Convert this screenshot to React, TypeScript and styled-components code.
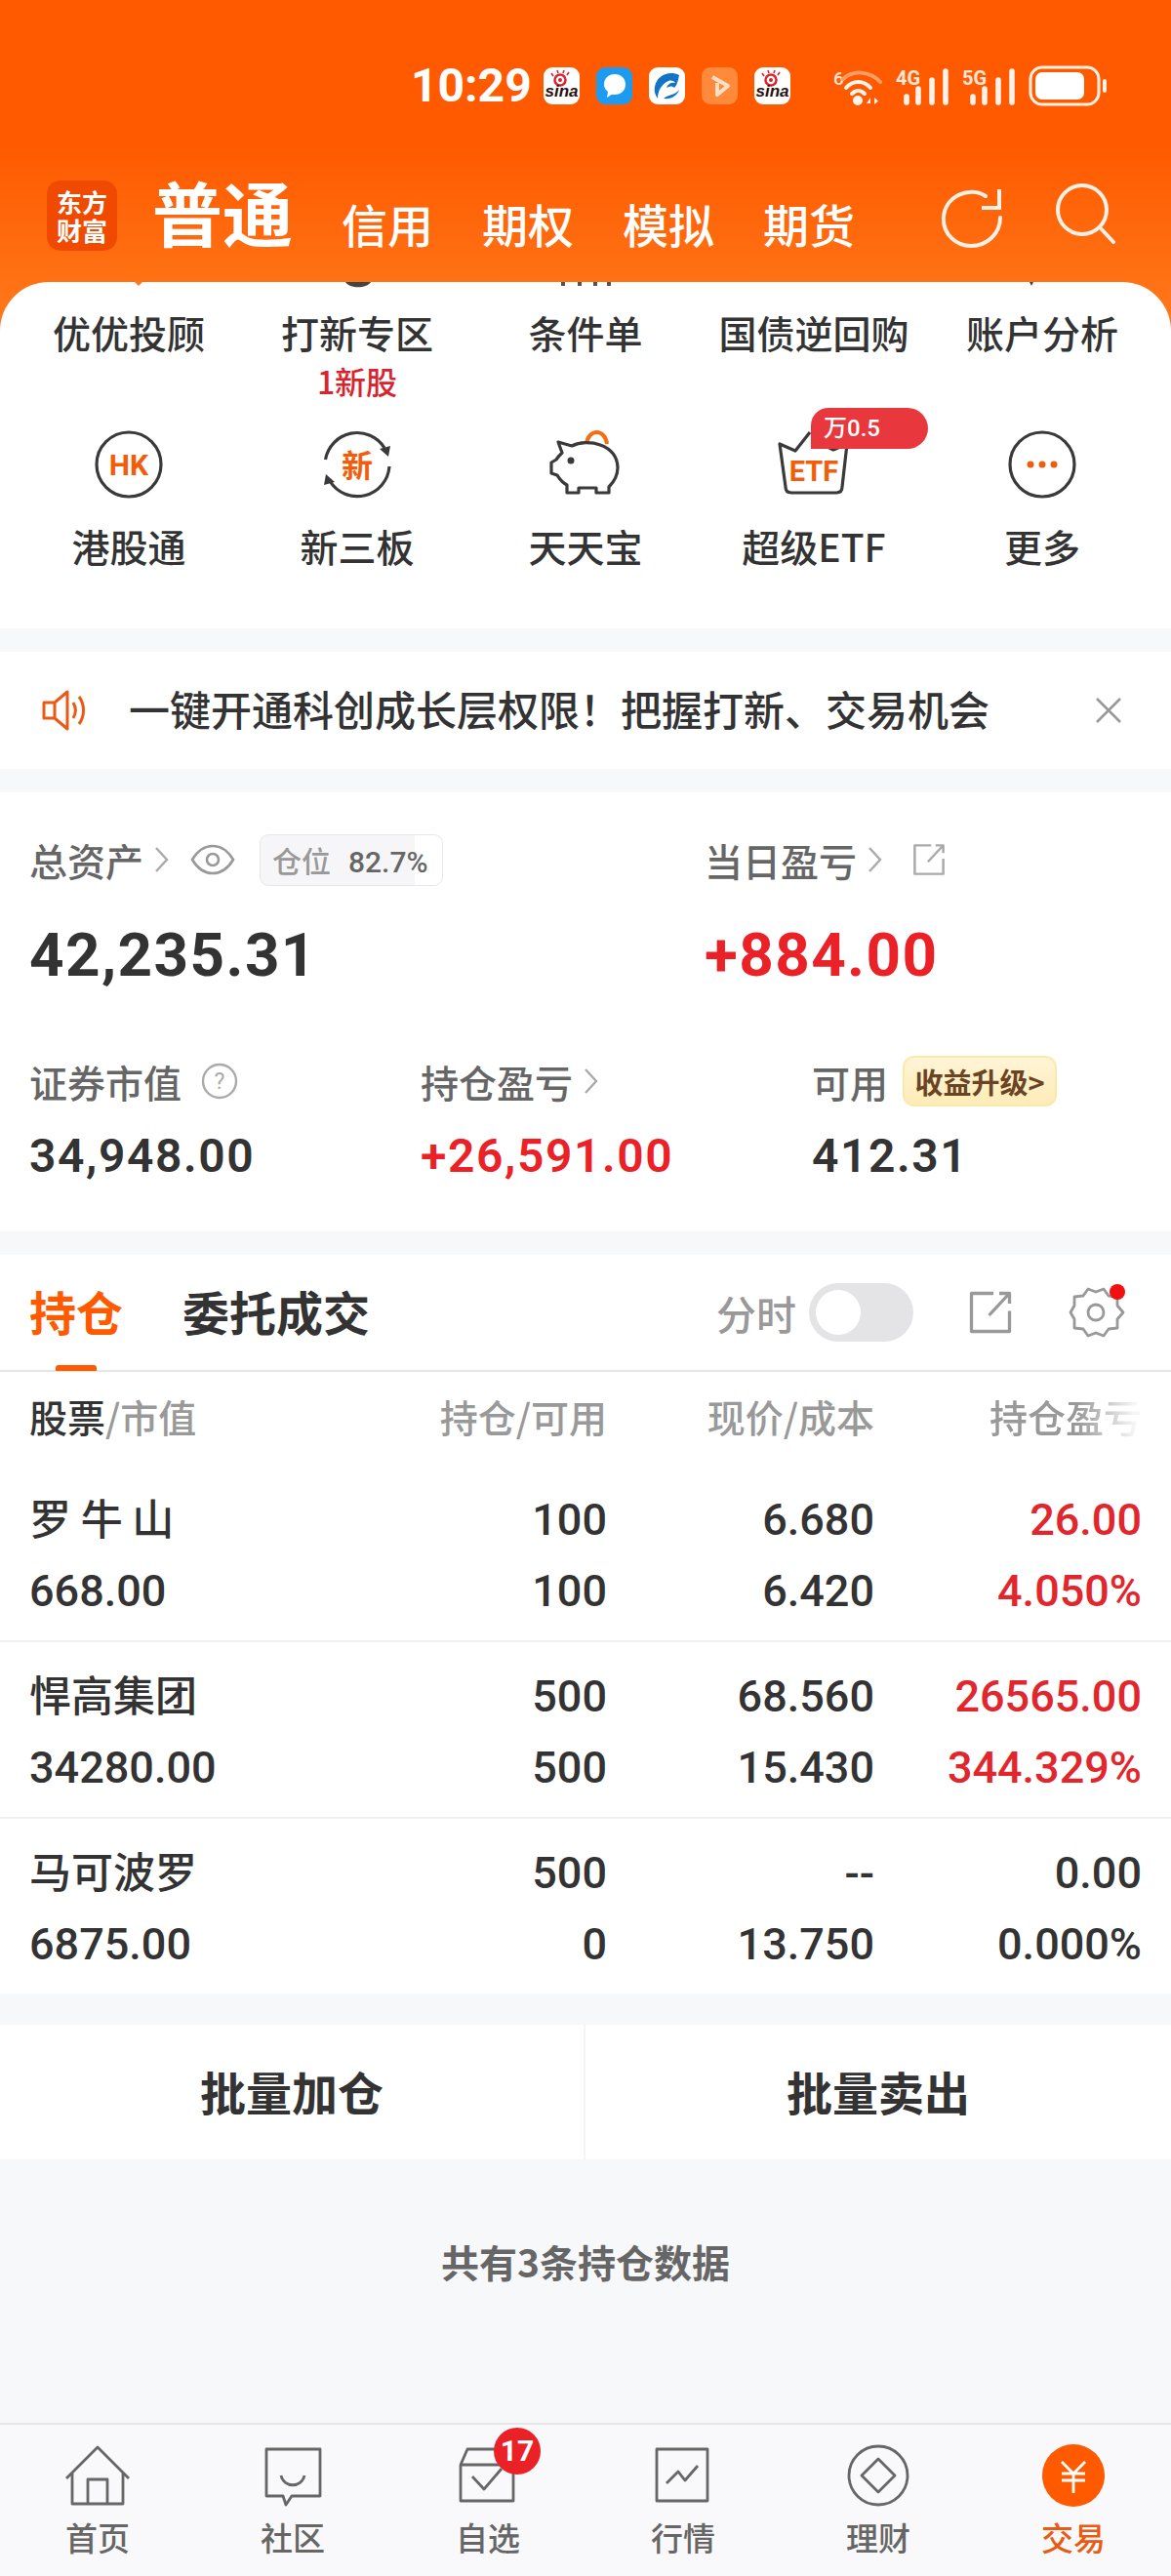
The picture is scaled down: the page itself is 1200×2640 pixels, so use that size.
import styled, { createGlobalStyle } from "styled-components";

const GlobalStyle = createGlobalStyle`
  html, body { margin: 0; padding: 0; background: #f7f8fa; }
  * { box-sizing: border-box; }
  body { font-family: "Noto Sans CJK SC", "Noto Sans", sans-serif; }
`;

const CN = `"Noto Sans CJK SC", sans-serif`;
const NUM = `Roboto, "Noto Sans CJK SC", sans-serif`;
const ORANGE = "#ff5a00";
const RED = "#ea2127";
const DARK = "#333333";
const BAND = "#f7f8fa";

const Page = styled.div`
  width: 1200px;
  height: 2640px;
  display: flex;
  flex-direction: column;
  background: ${BAND};
  overflow: hidden;
`;

const Top = styled.div`
  background: linear-gradient(180deg, #ff5a00 0, #ff5a00 150px, #ff7a1c 340px) top / 100% 340px no-repeat;
`;

const StatusBar = styled.div`
  display: flex;
  align-items: center;
  height: 38px;
  margin-top: 69px;
  padding-left: 421px;
`;

const Clock = styled.span`
  font: 700 48px/38px ${NUM};
  color: #fff;
  width: 136px;
`;

const StatusApps = styled.div`
  display: flex;
  gap: 17px;
  margin-right: 44px;
`;

const AppTile = styled.div<{ $bg: string }>`
  width: 37px;
  height: 38px;
  border-radius: 9px;
  background: ${({ $bg }) => $bg};
  display: flex;
  align-items: center;
  justify-content: center;
`;

const Signals = styled.div`
  display: flex;
  align-items: center;
  gap: 14px;
`;

const TopNav = styled.div`
  display: flex;
  align-items: flex-end;
  height: 72px;
  margin: 78px 0 32px;
  padding-left: 48px;
`;

const Logo = styled.div`
  width: 72px;
  height: 72px;
  border-radius: 14px;
  background: #f04a00;
  color: #fff;
  font: 700 26px/29px ${CN};
  text-align: center;
  padding-top: 7px;
`;

const MainTab = styled.span`
  font: 700 72px/72px ${CN};
  color: #fff;
  margin: 0 50px 5px 36px;
`;

const TradeTabs = styled.div`
  display: flex;
  gap: 50px;
  flex: 1;
  margin-bottom: 3px;
`;

const TradeTab = styled.span`
  font: 500 47px/50px ${CN};
  color: #fff;
`;

const NavIcons = styled.div`
  display: flex;
  gap: 52px;
  margin-right: 56px;
  align-self: center;
`;

const RefreshIcon = styled.svg`
  margin-top: 4px;
`;

const MenuCard = styled.div`
  background: #fff;
  border-radius: 50px 50px 0 0;
  padding: 0 15px 60px;
`;

const Peek = styled.svg`
  display: block;
  margin: 0 -15px;
  height: 8px;
`;

const MenuGrid = styled.div`
  display: grid;
  grid-template-columns: repeat(5, 234px);
  padding-top: 18px;
`;

const MenuCell = styled.div`
  display: flex;
  flex-direction: column;
  align-items: center;
  position: relative;
`;

const MenuLabel = styled.span`
  font: 500 39px/50px ${CN};
  color: ${DARK};
  white-space: nowrap;
`;

const NewStock = styled.span`
  font: 500 32px/36px ${CN};
  color: #d9232e;
  margin-top: 7px;
  height: 36px;
`;

const IconGrid = styled(MenuGrid)`
  padding-top: 33px;
`;

const MenuIcon = styled.svg`
  display: block;
  width: 80px;
  height: 72px;
  margin-bottom: 21px;
`;

const RateTag = styled.span`
  position: absolute;
  left: 114px;
  top: -23px;
  width: 120px;
  height: 42px;
  padding-left: 13px;
  border-radius: 18px 21px 21px 0;
  background: #e8383e;
  color: #fff;
  font: 500 24px/42px ${NUM};
`;

const Notice = styled.div`
  display: flex;
  align-items: center;
  height: 120px;
  margin-top: 24px;
  background: #fff;
  padding: 0 50px 0 43px;
`;

const NoticeText = styled.span`
  flex: 1;
  margin: 0 0 4px 41px;
  font: 500 42px/56px ${CN};
  color: ${DARK};
  white-space: nowrap;
`;

const AssetCard = styled.div`
  margin-top: 24px;
  height: 450px;
  background: #fff;
  padding: 41px 30px 0;
`;

const AssetTop = styled.div`
  display: grid;
  grid-template-columns: 692px 1fr;
`;

const LabelRow = styled.div`
  display: flex;
  align-items: center;
  height: 56px;
`;

const GrayLabel = styled.span`
  font: 500 39px/56px ${CN};
  color: #666;
  white-space: nowrap;
`;

const Chevron = styled.svg`
  width: 18px;
  height: 30px;
  margin-left: 10px;
`;

const LineIcon = styled.svg<{ $gap?: number }>`
  flex: none;
  margin-left: ${({ $gap }) => $gap ?? 0}px;
`;

const PositionChip = styled.span`
  margin-left: 25px;
  width: 188px;
  height: 53px;
  border: 1px solid #e8e8ea;
  border-radius: 9px;
  background: linear-gradient(90deg, #f6f6f8 85%, #fff 85%);
  font: 500 30px/51px ${CN};
  color: #999;
  padding-left: 12px;
  white-space: nowrap;
`;

const ChipValue = styled.span`
  margin-left: 18px;
  font: 500 30px/51px ${NUM};
  color: #666;
`;

const BigValue = styled.div<{ $red?: boolean }>`
  font: 700 62px/76px ${NUM};
  color: ${({ $red }) => ($red ? RED : DARK)};
  margin-top: 32px;
  letter-spacing: 1.4px;
`;

const AssetBottom = styled.div`
  display: grid;
  grid-template-columns: 401px 401px 1fr;
  margin-top: 63px;
`;

const SmallValue = styled.div<{ $red?: boolean }>`
  font: 600 48px/60px ${NUM};
  color: ${({ $red }) => ($red ? RED : DARK)};
  margin-top: 19px;
  letter-spacing: 1.6px;
`;

const Upgrade = styled.span`
  margin-left: 15px;
  width: 158px;
  height: 52px;
  border-radius: 12px;
  background: linear-gradient(180deg, #fff4d6, #fdecb8);
  border: 2px solid #fbe9a9;
  color: #6b4423;
  font: 700 29px/48px ${CN};
  text-align: center;
  white-space: nowrap;
`;

const Holdings = styled.div`
  margin-top: 24px;
  background: #fff;
`;

const TabBar = styled.div`
  display: flex;
  align-items: center;
  height: 120px;
  padding: 0 47px 0 30px;
  border-bottom: 2px solid #e6e6e8;
  position: relative;
`;

const HoldTab = styled.span<{ $active?: boolean }>`
  font: 700 48px/60px ${CN};
  color: ${({ $active }) => ($active ? ORANGE : DARK)};
  margin: 0 61px 5px 0;
`;

const TabUnderline = styled.i`
  position: absolute;
  left: 57px;
  bottom: -1px;
  width: 42px;
  height: 6px;
  border-radius: 3px 3px 0 0;
  background: ${ORANGE};
`;

const TabTools = styled.div`
  margin-left: auto;
  display: flex;
  align-items: center;
`;

const ToolLabel = styled.span`
  font: 500 41px/56px ${CN};
  color: #999;
`;

const Toggle = styled.span`
  display: block;
  margin: 0 55px 0 13px;
  width: 107px;
  height: 60px;
  border-radius: 30px;
  background: #e4e4e6;
  padding: 7px;
`;

const Knob = styled.i`
  display: block;
  width: 46px;
  height: 46px;
  border-radius: 50%;
  background: #fff;
`;

const TableGrid = styled.div`
  display: grid;
  grid-template-columns: 1fr 210px 274px 274px;
  padding: 0 30px;
`;

const HeadRow = styled(TableGrid)`
  height: 96px;
  align-items: center;
`;

const HeadCell = styled.span<{ $fade?: boolean }>`
  font: 500 39px/50px ${CN};
  color: #999;
  text-align: right;
  white-space: nowrap;
  margin-bottom: 6px;
  ${({ $fade }) =>
    $fade &&
    `mask-image: linear-gradient(90deg, #000 76%, rgba(0,0,0,.1) 97%);`}
`;

const HeadName = styled(HeadCell)`
  text-align: left;
  b { font-weight: 500; color: ${DARK}; }
`;

const StockRow = styled(TableGrid)<{ $last?: boolean }>`
  height: ${({ $last }) => ($last ? 179 : 181)}px;
  padding-top: 19px;
  align-content: start;
  border-bottom: ${({ $last }) => ($last ? "none" : "2px solid #f0f0f2")};
`;

const NameCell = styled.span`
  font: 500 43px/67px ${CN};
  height: 73px;
  color: ${DARK};
  white-space: pre;
`;

const NumCell = styled.span<{ $red?: boolean; $left?: boolean }>`
  font: 500 45px/73px ${NUM};
  color: ${({ $red }) => ($red ? "#e1262d" : DARK)};
  text-align: ${({ $left }) => ($left ? "left" : "right")};
`;

const BatchBar = styled.div`
  margin-top: 32px;
  height: 138px;
  background: #fff;
  display: grid;
  grid-template-columns: 1fr 1fr;
`;

const BatchButton = styled.div<{ $first?: boolean }>`
  display: flex;
  align-items: center;
  justify-content: center;
  padding-bottom: 2px;
  font: 700 47px/60px ${CN};
  color: ${DARK};
  border-right: ${({ $first }) => ($first ? "2px solid #f4f4f6" : "none")};
`;

const Footnote = styled.div`
  flex: 1;
  text-align: center;
  padding-top: 76px;
  font: 700 39px/56px ${CN};
  color: #666;
`;

const BottomNav = styled.div`
  height: 157px;
  background: #f9f9fb;
  border-top: 2px solid #e6e6e8;
  display: grid;
  grid-template-columns: repeat(6, 200px);
`;

const NavItem = styled.div`
  display: flex;
  flex-direction: column;
  align-items: center;
  padding-top: 20px;
  position: relative;
`;

const NavIcon = styled.svg`
  display: block;
  width: 70px;
  height: 70px;
`;

const NavLabel = styled.span<{ $active?: boolean }>`
  font: 500 33px/44px ${CN};
  margin-top: 3px;
  color: ${({ $active }) => ($active ? "#e95a12" : "#666")};
`;

const Badge = styled.span`
  position: absolute;
  left: 106px;
  top: 3px;
  width: 48px;
  height: 48px;
  border-radius: 50%;
  background: ${RED};
  color: #fff;
  font: 700 30px/48px ${NUM};
  text-align: center;
`;

const Sina = () => (
  <svg width="37" height="38" viewBox="0 0 37 38">
    <circle cx="17" cy="13" r="5.500" fill="none" stroke="#d9232e" strokeWidth="2.5" />
    <circle cx="17" cy="13" r="2" fill="#d9232e" />
    <path d="M10 9l-2-3M15 6l-1-3M20 6l1-3M24 8l2-3" stroke="#d9232e" strokeWidth="1.6" />
    <text x="18.5" y="30" textAnchor="middle" fontFamily="Liberation Sans, sans-serif" fontStyle="italic" fontWeight="700" fontSize="17" fill="#2a1010">sina</text>
  </svg>
);

const Chev = () => (
  <Chevron viewBox="0 0 18 30">
    <path d="M3 3l11 12L3 27" fill="none" stroke="#aaa" strokeWidth="2.4" />
  </Chevron>
);

const ShareIcon = ({ size, color, gap }: { size: number; color: string; gap?: number }) => (
  <LineIcon $gap={gap} width={size} height={size} viewBox="0 0 32 32">
    <path d="M18 3H3v26h26V15M15 18L28 4M22 3h7v7" fill="none" stroke={color} strokeWidth="2.2" strokeLinejoin="round" />
  </LineIcon>
);

const SignalBars = ({ label }: { label: string }) => (
  <svg width="54" height="42" viewBox="0 0 54 42">
    <text x="0" y="20" fontFamily="Roboto, sans-serif" fontWeight="700" fontSize="20" fill="#ffe6d6">{label}</text>
    <path d="M11 32v6M23 24v14M37 15v23M51 6v32" stroke="#fff3ea" strokeWidth="5.500" strokeLinecap="round" />
  </svg>
);

const ROWS = [
  { name: "罗 牛 山", value: "668.00", cells: ["100", "6.680", "26.00", "100", "6.420", "4.050%"], red: true },
  { name: "悍高集团", value: "34280.00", cells: ["500", "68.560", "26565.00", "500", "15.430", "344.329%"], red: true },
  { name: "马可波罗", value: "6875.00", cells: ["500", "--", "0.00", "0", "13.750", "0.000%"], red: false },
];

const NAV = ["首页", "社区", "自选", "行情", "理财", "交易"];

const navGlyphs = [
  <path key="h" d="M3 35L35 3l32 32M9 29v32h52V29M25 61V36h20v25" />,
  <path key="c" d="M8 5h55v48H34l-6 9-3-9H8zM23 32c3 13 21 13 24 0" />,
  <path key="s" d="M7 21h54v37H7zM7 21l7-16h36M19 33l12 13 18-21" />,
  <path key="m" d="M8 5h52v53H8zM18 40l12-12 7 9 13-15" />,
  <g key="f"><circle cx="35" cy="32" r="30" /><path d="M35 15l17 17-17 17-17-17z" /></g>,
];

export default function App() {
  return (
    <Page>
      <GlobalStyle />
      <Top>
        <StatusBar>
          <Clock>10:29</Clock>
          <StatusApps>
            <AppTile $bg="#fff"><Sina /></AppTile>
            <AppTile $bg="#1d9bf0">
              <svg width="26" height="28" viewBox="0 0 26 28">
                <path d="M13 2c6.500 0 11 4.500 11 10.500S19.500 23 13 23c-1 0-2 0-3-.3L5 26l1-6C3.500 18 2 15.500 2 12.500 2 6.500 6.500 2 13 2z" fill="#fff" />
              </svg>
            </AppTile>
            <AppTile $bg="#fff">
              <svg width="32" height="32" viewBox="0 0 32 32">
                <path d="M28 5C18 0 5 5 3 17c-1 5 1 9 3 12 0-8 4-15 11-18 3-1 6 0 7 2-4-1-8 1-9 5 3-2 6-2 8 0 3-3 4-8 5-13z" fill="#1273c9" />
                <path d="M12 29c4-4 11-3 16-9-2 6-8 10-16 9z" fill="#1273c9" />
              </svg>
            </AppTile>
            <AppTile $bg="#ff8a3c">
              <svg width="22" height="24" viewBox="0 0 22 24">
                <path d="M3 3l16 9-11 9V9" fill="none" stroke="#ffe0c4" strokeWidth="4" strokeLinejoin="round" />
              </svg>
            </AppTile>
            <AppTile $bg="#fff"><Sina /></AppTile>
          </StatusApps>
          <Signals>
            <svg width="50" height="42" viewBox="0 0 50 42">
              <text x="0" y="20" fontFamily="Roboto, sans-serif" fontWeight="500" fontSize="19" fill="#ffe6d6">6</text>
              <path d="M10 14c9-9 27-9 38 3" fill="none" stroke="#ff9d66" strokeWidth="4" strokeLinecap="round" />
              <path d="M13 23c7-8 18-8 25 0M19 29c4-4 9-4 13 0" fill="none" stroke="#fff3ea" strokeWidth="4" strokeLinecap="round" />
              <circle cx="25" cy="36" r="5" fill="#fff3ea" />
              <path d="M34 39l4-6v6zM42 33v7l4-3.500z" fill="#fff3ea" />
            </svg>
            <SignalBars label="4G" />
            <SignalBars label="5G" />
            <svg width="82" height="42" viewBox="0 0 82 42">
              <rect x="2" y="2" width="70" height="38" rx="12" fill="none" stroke="#fff0e4" strokeWidth="3" />
              <rect x="7" y="7" width="50" height="28" rx="7" fill="#fff" />
              <rect x="76" y="14" width="4" height="14" rx="2" fill="#fff0e4" />
            </svg>
          </Signals>
        </StatusBar>
        <TopNav>
          <Logo>东方<br />财富</Logo>
          <MainTab>普通</MainTab>
          <TradeTabs>
            <TradeTab>信用</TradeTab>
            <TradeTab>期权</TradeTab>
            <TradeTab>模拟</TradeTab>
            <TradeTab>期货</TradeTab>
          </TradeTabs>
          <NavIcons>
            <RefreshIcon width="64" height="62" viewBox="0 0 64 62">
              <path d="M46 9C30 -2 4 9 3 31c-1 17 13 29 28 29 17 0 30-13 30-29" fill="none" stroke="#ffefe4" strokeWidth="4" strokeLinecap="round" />
              <path d="M60 2v19H42" fill="none" stroke="#ffefe4" strokeWidth="4" />
            </RefreshIcon>
            <svg width="64" height="62" viewBox="0 0 64 62">
              <circle cx="29" cy="27" r="25" fill="none" stroke="#ffefe4" strokeWidth="4" />
              <path d="M47 45l14 15" stroke="#ffefe4" strokeWidth="4" strokeLinecap="round" />
            </svg>
          </NavIcons>
        </TopNav>
        <MenuCard>
          <Peek width="1200" height="8" viewBox="0 0 1200 8">
            <path d="M138 0l4 4 4-4z" fill="#ef7a30" />
            <path d="M354 0c4 7 22 7 26 0z" fill="#444" />
            <path d="M575 0h4v4h-4zM592 0h4v4h-4zM608 0h4v4h-4zM622 0h4v4h-4z" fill="#555" />
            <path d="M1055 0l2 4 2-4z" fill="#444" />
          </Peek>
          <MenuGrid>
            <MenuCell><MenuLabel>优优投顾</MenuLabel></MenuCell>
            <MenuCell><MenuLabel>打新专区</MenuLabel><NewStock>1新股</NewStock></MenuCell>
            <MenuCell><MenuLabel>条件单</MenuLabel></MenuCell>
            <MenuCell><MenuLabel>国债逆回购</MenuLabel></MenuCell>
            <MenuCell><MenuLabel>账户分析</MenuLabel></MenuCell>
          </MenuGrid>
          <IconGrid>
            <MenuCell>
              <MenuIcon viewBox="0 0 80 72">
                <circle cx="40" cy="35" r="33" fill="none" stroke="#3a3a3a" strokeWidth="3.2" />
                <text x="40" y="46" textAnchor="middle" fontFamily="Roboto, sans-serif" fontWeight="700" fontSize="30" fill="#f25d0c">HK</text>
              </MenuIcon>
              <MenuLabel>港股通</MenuLabel>
            </MenuCell>
            <MenuCell>
              <MenuIcon viewBox="0 0 80 72">
                <path d="M7.500 30A33 33 0 0 1 68 18M73 37A33 33 0 0 1 12 52" fill="none" stroke="#3a3a3a" strokeWidth="3.2" />
                <path d="M63 19l11-3-2 11zM17 53L6 56l2-11z" fill="#3a3a3a" />
                <text x="40" y="48" textAnchor="middle" fontFamily="Noto Sans CJK SC, sans-serif" fontWeight="700" fontSize="32" fill="#f25d0c">新</text>
              </MenuIcon>
              <MenuLabel>新三板</MenuLabel>
            </MenuCell>
            <MenuCell>
              <MenuIcon viewBox="0 0 80 72">
                <path d="M41 14C43 -2 60 -2 62 14" fill="none" stroke="#f2700f" strokeWidth="4" />
                <path d="M12 12l14 4c16-8 46-2 47 22 0 10-5 16-9 20v6H51v-5H33v5H21v-8c-6-3-8-7-10-10l-6-2V33l5-3c2-3 4-5 6-7z" fill="none" stroke="#3a3a3a" strokeWidth="3.2" strokeLinejoin="round" />
                <circle cx="25" cy="31" r="3.500" fill="#3a3a3a" />
              </MenuIcon>
              <MenuLabel>天天宝</MenuLabel>
            </MenuCell>
            <MenuCell>
              <MenuIcon viewBox="0 0 80 72">
                <path d="M36 2L21 21 5 14l6 44c0 4 2 6 6 6h46c4 0 6-2 6-6l5-44-14 6-8-4" fill="none" stroke="#3a3a3a" strokeWidth="3.2" strokeLinejoin="round" />
                <text x="40" y="52" textAnchor="middle" fontFamily="Roboto, sans-serif" fontWeight="700" fontSize="29" fill="#f25d0c">ETF</text>
              </MenuIcon>
              <RateTag>万0.5</RateTag>
              <MenuLabel>超级ETF</MenuLabel>
            </MenuCell>
            <MenuCell>
              <MenuIcon viewBox="0 0 80 72">
                <circle cx="40" cy="35" r="33" fill="none" stroke="#3a3a3a" strokeWidth="3.2" />
                <circle cx="28" cy="35" r="3.500" fill="#f25d0c" />
                <circle cx="40" cy="35" r="3.500" fill="#f25d0c" />
                <circle cx="52" cy="35" r="3.500" fill="#f25d0c" />
              </MenuIcon>
              <MenuLabel>更多</MenuLabel>
            </MenuCell>
          </IconGrid>
        </MenuCard>
      </Top>

      <Notice>
        <svg width="48" height="42" viewBox="0 0 48 42">
          <path d="M2 13h11L26 2v38L13 29H2zM13 13v16" fill="none" stroke="#ea5a12" strokeWidth="3" strokeLinejoin="round" />
          <path d="M32 13c3 5 3 11 0 16M38 7c6 8 6 20 0 28" fill="none" stroke="#ea5a12" strokeWidth="3" />
        </svg>
        <NoticeText>一键开通科创成长层权限！把握打新、交易机会</NoticeText>
        <svg width="28" height="28" viewBox="0 0 28 28">
          <path d="M2 2l24 24M26 2L2 26" stroke="#999" strokeWidth="2.600" />
        </svg>
      </Notice>

      <AssetCard>
        <AssetTop>
          <div>
            <LabelRow>
              <GrayLabel>总资产</GrayLabel>
              <Chev />
              <LineIcon $gap={20} width="46" height="32" viewBox="0 0 46 32">
                <path d="M2 16C8 6 15 2 23 2s15 4 21 14c-6 10-13 14-21 14S8 26 2 16z" fill="none" stroke="#999" strokeWidth="2.600" />
                <circle cx="23" cy="16" r="6" fill="none" stroke="#999" strokeWidth="2.600" />
              </LineIcon>
              <PositionChip>仓位<ChipValue>82.7%</ChipValue></PositionChip>
            </LabelRow>
            <BigValue>42,235.31</BigValue>
          </div>
          <div>
            <LabelRow>
              <GrayLabel>当日盈亏</GrayLabel>
              <Chev />
              <ShareIcon size={36} color="#aaa" gap={28} />
            </LabelRow>
            <BigValue $red>+884.00</BigValue>
          </div>
        </AssetTop>
        <AssetBottom>
          <div>
            <LabelRow>
              <GrayLabel>证券市值</GrayLabel>
              <LineIcon $gap={20} width="38" height="38" viewBox="0 0 38 38">
                <circle cx="19" cy="19" r="17" fill="none" stroke="#aaa" strokeWidth="2.400" />
                <text x="19" y="27" textAnchor="middle" fontFamily="Roboto, sans-serif" fontSize="23" fill="#aaa">?</text>
              </LineIcon>
            </LabelRow>
            <SmallValue>34,948.00</SmallValue>
          </div>
          <div>
            <LabelRow>
              <GrayLabel>持仓盈亏</GrayLabel>
              <Chev />
            </LabelRow>
            <SmallValue $red>+26,591.00</SmallValue>
          </div>
          <div>
            <LabelRow>
              <GrayLabel>可用</GrayLabel>
              <Upgrade>收益升级&gt;</Upgrade>
            </LabelRow>
            <SmallValue>412.31</SmallValue>
          </div>
        </AssetBottom>
      </AssetCard>

      <Holdings>
        <TabBar>
          <HoldTab $active>持仓</HoldTab>
          <HoldTab>委托成交</HoldTab>
          <TabUnderline />
          <TabTools>
            <ToolLabel>分时</ToolLabel>
            <Toggle><Knob /></Toggle>
            <ShareIcon size={48} color="#999" />
            <LineIcon $gap={56} width="58" height="58" viewBox="0 0 58 58">
              <path d="M20 5l8 3 8-3 5 7 9 1v9l6 7-6 7v9l-9 1-5 7-8-3-8 3-5-7-9-1v-9l-4-7 4-7v-9l9-1z" fill="none" stroke="#999" strokeWidth="2.800" strokeLinejoin="round" />
              <circle cx="28" cy="29" r="8" fill="none" stroke="#999" strokeWidth="2.800" />
              <circle cx="50" cy="8" r="8" fill="#f01010" />
            </LineIcon>
          </TabTools>
        </TabBar>
        <HeadRow>
          <HeadName><b>股票</b>/市值</HeadName>
          <HeadCell>持仓/可用</HeadCell>
          <HeadCell>现价/成本</HeadCell>
          <HeadCell $fade>持仓盈亏</HeadCell>
        </HeadRow>
        {ROWS.map((row, i) => (
          <StockRow key={row.name} $last={i === ROWS.length - 1}>
            <NameCell>{row.name}</NameCell>
            <NumCell>{row.cells[0]}</NumCell>
            <NumCell>{row.cells[1]}</NumCell>
            <NumCell $red={row.red}>{row.cells[2]}</NumCell>
            <NumCell $left>{row.value}</NumCell>
            <NumCell>{row.cells[3]}</NumCell>
            <NumCell>{row.cells[4]}</NumCell>
            <NumCell $red={row.red}>{row.cells[5]}</NumCell>
          </StockRow>
        ))}
      </Holdings>

      <BatchBar>
        <BatchButton $first>批量加仓</BatchButton>
        <BatchButton>批量卖出</BatchButton>
      </BatchBar>

      <Footnote>共有3条持仓数据</Footnote>

      <BottomNav>
        {NAV.map((label, i) => (
          <NavItem key={label}>
            {i < 5 ? (
              <NavIcon viewBox="0 0 70 70" fill="none" stroke="#666" strokeWidth="2.800" strokeLinejoin="round">
                {navGlyphs[i]}
              </NavIcon>
            ) : (
              <NavIcon viewBox="0 0 70 70">
                <circle cx="35" cy="32" r="32" fill={ORANGE} />
                <path d="M23 18l12 12 12-12M23 30h24M23 37h24M35 30v20" fill="none" stroke="#fff" strokeWidth="2.800" />
              </NavIcon>
            )}
            {i === 2 && <Badge>17</Badge>}
            <NavLabel $active={i === 5}>{label}</NavLabel>
          </NavItem>
        ))}
      </BottomNav>
    </Page>
  );
}
